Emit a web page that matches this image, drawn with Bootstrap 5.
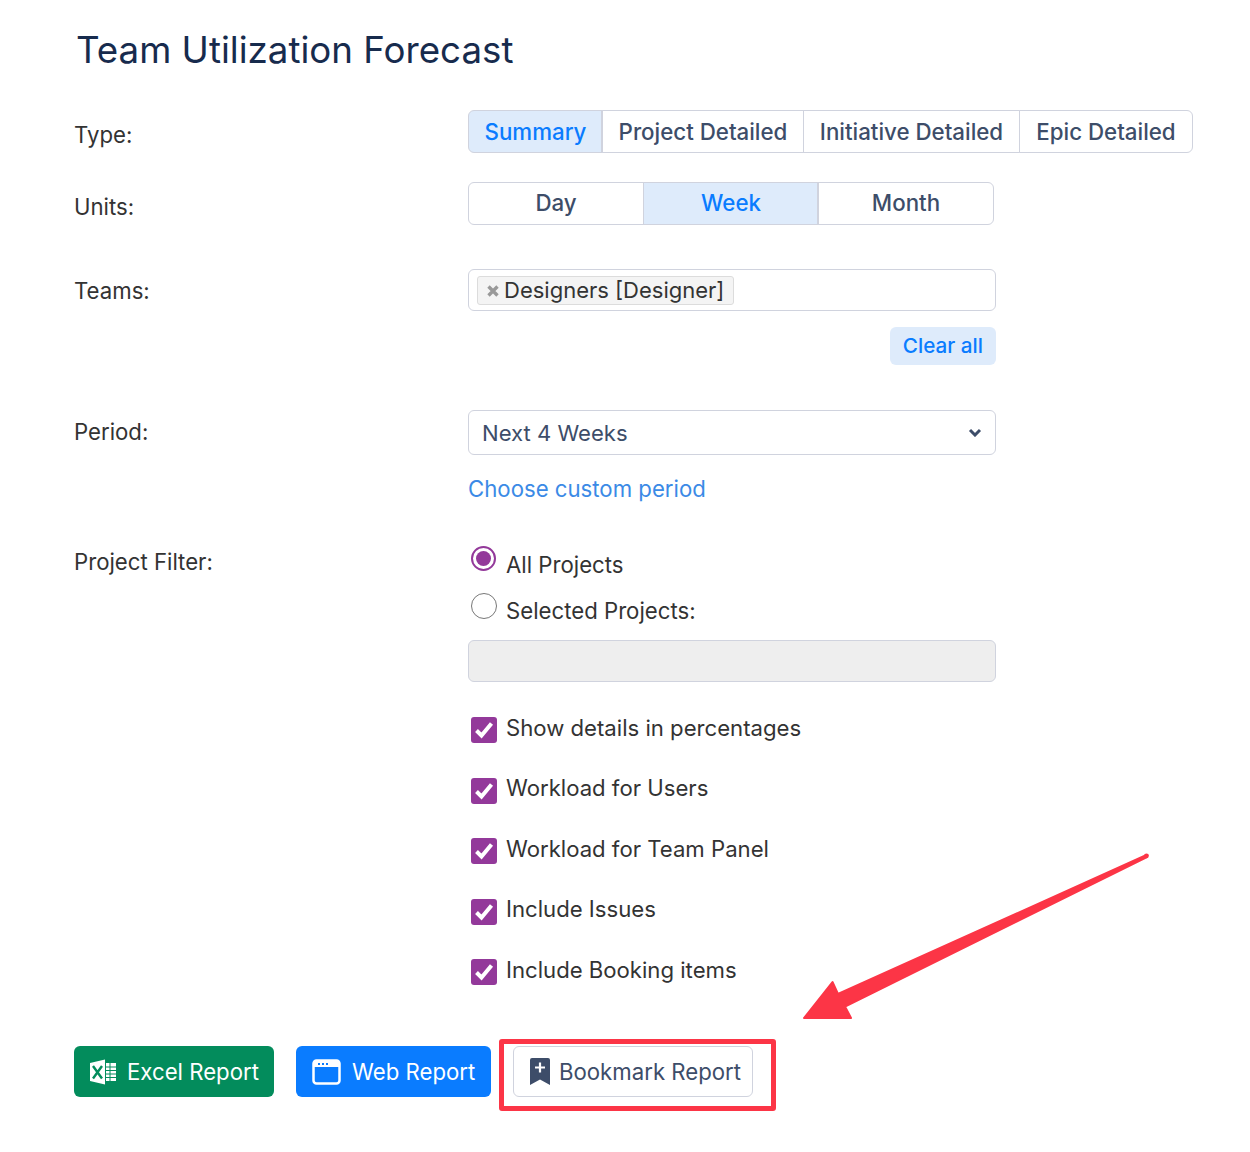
<!DOCTYPE html>
<html lang="en">
<head>
  <meta charset="UTF-8">
  <meta name="viewport" content="width=device-width, initial-scale=1.0">
  <title>Team Utilization Forecast</title>
  <link href="https://cdn.jsdelivr.net/npm/bootstrap@5.3.0/dist/css/bootstrap.min.css" rel="stylesheet">
  <style>
    body { font-family: Inter, "Liberation Sans", sans-serif; color: #333; background: #fff; }
    .page-wrap { position: relative; width: 1250px; height: 1152px; padding: 28px 0 0 74px; overflow: hidden; }
    .page-title { font-size: 36.7px; line-height: 44px; font-weight: 400; color: #172b4d; margin: 0 0 38px 2px; }
    .form-line { display: flex; font-size: 22.2px; }
    .type-line { margin-bottom: 29px; }
    .unit-line { margin-bottom: 44px; }
    .team-line { margin-bottom: 45px; }
    .filter-line { margin-top: 36px; }
    .line-label { width: 394px; flex: none; }
    .line-body { width: 528px; flex: none; }
    .label-type { padding-top: 8px; }
    .label-team { padding-top: 5px; }
    .label-period { padding-top: 5px; }
    .label-filter { padding-top: 3px; }

    .seg-group .btn { font-size: 22.3px; font-weight: 500; color: #3d4d69; background: #fff; border-color: #d0d3de; height: 43px; padding: 0; line-height: 41px; }
    .seg-group .btn.active { color: #0a7cff; background: #deebfb; border-color: #d0d3de; box-shadow: inset -1px 0 0 #d0d3de; }
    .type-group { width: 725px; }
    .type-group .btn { flex: none; }
    .seg-summary { width: 135px; }
    .seg-project { width: 202px; }
    .seg-initiative { width: 217px; }
    .seg-epic { width: 174px; }
    .unit-group { width: 526px; }
    .unit-group .btn { width: 176px; flex: none; line-height: 39px; padding-bottom: 2px; }

    .tag-box { display: flex; align-items: flex-start; height: 42px; border: 1px solid #d0d3de; border-radius: 6px; padding: 6px 8px; }
    .tag-item { display: inline-flex; align-items: center; height: 29px; background: #f4f4f4; border: 1px solid #dcdcdc; border-radius: 3px; padding: 0 9px; font-size: 22px; color: #333; }
    .tag-x { width: 12px; height: 12px; margin-right: 5px; }
    .clear-wrap { margin-top: 16px; }
    .btn.clear-btn { font-size: 20.7px; font-weight: 500; height: 38px; line-height: 38px; padding: 0 13px; color: #0a7cff; background: #deebfb; border: 0; border-radius: 6px; }
    .form-select.period-select { height: 45px; font-size: 22.1px; color: #3d4d69; border-color: #d0d3de; border-radius: 6px; padding: 2px 13px 0; background-image: none; }
    .select-wrap { position: relative; }
    .select-arrow { position: absolute; right: 14px; top: 18px; width: 14px; height: 9px; }
    .custom-link { display: block; font-size: 22.2px; line-height: 34px; margin-top: 17px; color: #3b8ae6; text-decoration: none; }

    .radio-line { display: flex; height: 46px; font-size: 22.2px; }
    .radio-dot { width: 26px; height: 26px; border-radius: 50%; border: 1.5px solid #777; margin: 5px 9px 0 3px; flex: none; background: #fff; }
    .radio-dot.on { border: 2px solid #93399a; padding: 3px; background: #93399a content-box; width: 25px; height: 25px; margin: 4px 10px 0 3px; }
    .radio-text { padding-top: 6px; line-height: 34px; }
    .off-input { height: 42px; margin-top: 6px; background: #eee; border: 1px solid #d0d3de; border-radius: 6px; }
    .tick-list { margin-top: 29.5px; display: flex; flex-direction: column; gap: 26.5px; }
    .tick-line { display: flex; align-items: center; height: 34px; font-size: 22.15px; }
    .tick-box { width: 26px; height: 26px; background: #93399a; border-radius: 3px; margin: 3px 9px 0 3px; flex: none; display: flex; align-items: center; justify-content: center; }

    .action-row { display: flex; margin-top: 58.5px; }
    .btn.report-btn { display: inline-flex; align-items: center; height: 51px; font-size: 22.2px; font-weight: 400; border-radius: 6px; padding: 0; color: #fff; border: 0; }
    .excel-btn { width: 200px; background: #038c5c !important; padding-left: 16px !important; margin-right: 22px; }
    .excel-btn svg { margin-right: 11px; }
    .web-btn { width: 195px; background: #0a7cff !important; padding-left: 16px !important; margin-right: 22px; }
    .web-btn svg { margin-right: 10px; }
    .btn.bookmark-btn { width: 240px; background: #fff; color: #3d4d69; border: 1px solid #d0d3de; padding-left: 16px; }
    .bookmark-btn svg { margin-right: 9px; }

    .mark-rect { position: absolute; left: 499px; top: 1039px; width: 277px; height: 72px; border: 5.500px solid #fc3546; border-radius: 3px; pointer-events: none; }
    .mark-arrow { position: absolute; left: 0; top: 0; pointer-events: none; }
  </style>
</head>
<body>
<div class="page-wrap">
  <h1 class="page-title">Team Utilization Forecast</h1>

  <div class="form-line type-line">
    <div class="line-label label-type">Type:</div>
    <div class="btn-group seg-group type-group" role="group">
      <button type="button" class="btn active seg-summary">Summary</button>
      <button type="button" class="btn seg-project">Project Detailed</button>
      <button type="button" class="btn seg-initiative">Initiative Detailed</button>
      <button type="button" class="btn seg-epic">Epic Detailed</button>
    </div>
  </div>

  <div class="form-line unit-line">
    <div class="line-label label-type">Units:</div>
    <div class="btn-group seg-group unit-group" role="group">
      <button type="button" class="btn">Day</button>
      <button type="button" class="btn active">Week</button>
      <button type="button" class="btn">Month</button>
    </div>
  </div>

  <div class="form-line team-line">
    <div class="line-label label-team">Teams:</div>
    <div class="line-body">
      <div class="tag-box">
        <span class="tag-item">
          <svg class="tag-x" viewBox="0 0 12 12"><path d="M1.500 1.500l9 9M10.500 1.500l-9 9" stroke="#999" stroke-width="3.400" fill="none"/></svg>Designers [Designer]
        </span>
      </div>
      <div class="d-flex justify-content-end clear-wrap">
        <button type="button" class="btn clear-btn">Clear all</button>
      </div>
    </div>
  </div>

  <div class="form-line period-line">
    <div class="line-label label-period">Period:</div>
    <div class="line-body">
      <div class="select-wrap">
        <select class="form-select period-select"><option>Next 4 Weeks</option></select>
        <svg class="select-arrow" viewBox="0 0 14 9"><path d="M2 2l5 5 5-5" stroke="#3d4d69" stroke-width="3" fill="none"/></svg>
      </div>
      <a href="#" class="custom-link">Choose custom period</a>
    </div>
  </div>

  <div class="form-line filter-line">
    <div class="line-label label-filter">Project Filter:</div>
    <div class="line-body">
      <div class="radio-line"><span class="radio-dot on"></span><span class="radio-text">All Projects</span></div>
      <div class="radio-line"><span class="radio-dot"></span><span class="radio-text">Selected Projects:</span></div>
      <div class="off-input"></div>
      <div class="tick-list">
        <div class="tick-line"><span class="tick-box"><svg width="20" height="18" viewBox="0 0 20 18"><path d="M2.500 9.500l5 5 10-12" stroke="#fff" stroke-width="4" fill="none"/></svg></span>Show details in percentages</div>
        <div class="tick-line"><span class="tick-box"><svg width="20" height="18" viewBox="0 0 20 18"><path d="M2.500 9.500l5 5 10-12" stroke="#fff" stroke-width="4" fill="none"/></svg></span>Workload for Users</div>
        <div class="tick-line"><span class="tick-box"><svg width="20" height="18" viewBox="0 0 20 18"><path d="M2.500 9.500l5 5 10-12" stroke="#fff" stroke-width="4" fill="none"/></svg></span>Workload for Team Panel</div>
        <div class="tick-line"><span class="tick-box"><svg width="20" height="18" viewBox="0 0 20 18"><path d="M2.500 9.500l5 5 10-12" stroke="#fff" stroke-width="4" fill="none"/></svg></span>Include Issues</div>
        <div class="tick-line"><span class="tick-box"><svg width="20" height="18" viewBox="0 0 20 18"><path d="M2.500 9.500l5 5 10-12" stroke="#fff" stroke-width="4" fill="none"/></svg></span>Include Booking items</div>
      </div>
    </div>
  </div>

  <div class="action-row">
    <button type="button" class="btn report-btn excel-btn">
      <svg width="26" height="26" viewBox="0 0 26 26">
        <path fill="#fff" d="M0 4l15-3.500v25L0 22z"/>
        <path d="M3 7l9 12.500M12 7L3 19.500" stroke="#038c5c" stroke-width="2.400" fill="none"/>
        <path fill="#fff" d="M16 4h10v18H16z"/>
        <path d="M16 8h10M16 11.500h10M16 15h10M16 18.500h10M20 4v18" stroke="#038c5c" stroke-width="1" fill="none"/>
      </svg>Excel Report
    </button>
    <button type="button" class="btn report-btn web-btn">
      <svg width="30" height="26" viewBox="0 0 30 26">
        <rect x="1.500" y="1.500" width="26" height="23" rx="3" fill="none" stroke="#fff" stroke-width="2.500"/>
        <path fill="#fff" d="M2 2h25v6H2z"/>
        <path d="M6 5h2M10 5h2M14 5h2" stroke="#0a7cff" stroke-width="1.800"/>
      </svg>Web Report
    </button>
    <button type="button" class="btn report-btn bookmark-btn">
      <svg width="20" height="27" viewBox="0 0 20 27">
        <path fill="#3d4d69" d="M2 0h16a2 2 0 0 1 2 2v25l-10-5.500L0 27V2a2 2 0 0 1 2-2z"/>
        <path d="M10 4.500v10M5 9.500h10" stroke="#fff" stroke-width="2.200"/>
      </svg>Bookmark Report
    </button>
  </div>

  <div class="mark-rect"></div>
  <svg class="mark-arrow" width="1250" height="1152" viewBox="0 0 1250 1152">
    <circle cx="1146.500" cy="855.800" r="2.400" fill="#fc3546"/>
    <path fill="#fc3546" stroke="#fc3546" stroke-width="2" stroke-linejoin="round" d="M1146.500 855 L1147 857 L845 1006.500 L851 1018 L804 1018 L832.500 982 L838 994 Z"/>
  </svg>
</div>
<script src="https://cdn.jsdelivr.net/npm/bootstrap@5.3.0/dist/js/bootstrap.bundle.min.js"></script>
</body>
</html>
